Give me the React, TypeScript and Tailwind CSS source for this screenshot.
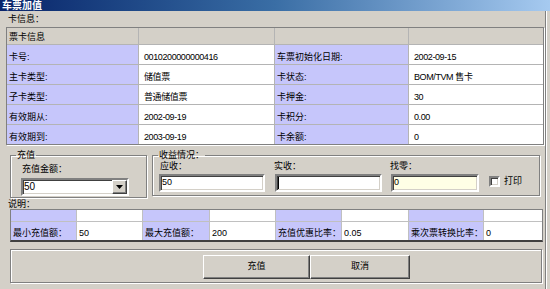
const font = "font-['Liberation_Sans','Noto_Sans_CJK_SC',sans-serif]";

const cardRows: [string, string, string, string][] = [
  ["卡号:", "0010200000000416", "车票初始化日期:", "2002-09-15"],
  ["主卡类型:", "储值票", "卡状态:", "BOM/TVM 售卡"],
  ["子卡类型:", "普通储值票", "卡押金:", "30"],
  ["有效期从:", "2002-09-19", "卡积分:", "0.00"],
  ["有效期到:", "2003-09-19", "卡余额:", "0"],
];

const limits: [string, string][] = [
  ["最小充值额：", "50"],
  ["最大充值额：", "200"],
  ["充值优惠比率：", "0.05"],
  ["乘次票转换比率：", "0"],
];

const sunken =
  "border-2 border-t-[#808080] border-l-[#808080] border-b-white border-r-white shadow-[inset_1px_1px_0_#404040,inset_-1px_-1px_0_#d4d0c8]";
const raised =
  "border border-t-white border-l-white border-b-[#404040] border-r-[#404040] shadow-[inset_-1px_-1px_0_#808080]";
const etched = "border border-[#808080] shadow-[inset_1px_1px_0_#fff,1px_1px_0_#fff]";

function TextBox({ value, className = "", caret = false }: { value: string; className?: string; caret?: boolean }) {
  return (
    <div className={`h-[18px] ${sunken} ${className} flex items-start pl-[1px] pt-[1px] text-[9px] leading-[10px]`}>
      {caret && <span className="w-px h-[12px] bg-black" />}
      {value}
    </div>
  );
}

export default function App() {
  return (
    <div className={`w-[550px] h-[289px] bg-[#d4d0c8] flex flex-col text-black ${font} overflow-hidden`}>
      {/* title bar */}
      <div className="h-[11px] bg-gradient-to-r from-[#0a246a] via-[#3a6ea5] to-[#a6caf0] flex items-center pl-[2px]">
        <span className="text-white font-bold text-[10px] leading-[11px]">车票加值</span>
      </div>

      <div className="flex-1 flex flex-col border-r border-r-[#808080] mr-[4px] shadow-[1px_0_0_#fff]">
        {/* card info */}
        <div className="h-[16px] pl-[8px] pt-[3px] text-[9px] leading-[11px]">卡信息：</div>
        <div className="ml-[6px] w-[538px] border border-[#808080] shadow-[1px_1px_0_#fff]">
          <div className="grid grid-cols-[131px_135px_133px_134px] grid-rows-[16px_repeat(5,19px)] gap-px bg-[#b4b4b4] text-[9px] leading-[11px]">
            <div className="bg-[#d4d0c8] flex items-end pl-[2px] pb-[1px]">票卡信息</div>
            <div className="bg-[#d4d0c8]" />
            <div className="bg-[#d4d0c8]" />
            <div className="bg-[#d4d0c8]" />
            {cardRows.map((r) => (
              <div key={r[0]} className="contents">
                <div className="bg-[#c6c6fb] flex items-end pl-[2px] pb-[1px]">{r[0]}</div>
                <div className="bg-white flex items-end pl-[5px] pb-[1px] tracking-[-0.4px]">{r[1]}</div>
                <div className="bg-[#c6c6fb] flex items-end pl-[2px] pb-[1px]">{r[2]}</div>
                <div className="bg-white flex items-end pl-[5px] pb-[1px] tracking-[-0.4px]">{r[3]}</div>
              </div>
            ))}
          </div>
        </div>

        {/* recharge + income */}
        <div className="mt-[5px] h-[49px] flex items-start text-[9px] leading-[11px]">
          <fieldset className={`ml-[10px] w-[137px] h-[48px] ${etched}`}>
            <legend className="ml-[5px] px-[1px]">充值</legend>
            <div className="pl-[11px] mt-[3px]">充值金额：</div>
            <div className={`ml-[10px] mt-[3px] w-[108px] h-[18px] ${sunken} bg-white flex items-stretch`}>
              <div className="flex-1 pl-[1px] pt-[1px] leading-[12px] text-[10px]">50</div>
              <div className={`w-[15px] bg-[#d4d0c8] ${raised} flex items-center justify-center`}>
                <svg width="7" height="4" viewBox="0 0 7 4">
                  <path d="M0 0h7L3.5 4z" fill="#000" />
                </svg>
              </div>
            </div>
          </fieldset>

          <fieldset className={`ml-[5px] w-[388px] h-[46px] ${etched}`}>
            <legend className="ml-[5px] px-[1px]">收益情况：</legend>
            <div className="flex items-start pl-[6px]">
              <div className="flex flex-col w-[106px]">
                <span className="pl-[1px]">应收：</span>
                <TextBox value="50" className="mt-[2px] bg-white" />
              </div>
              <div className="flex flex-col w-[107px] ml-[10px]">
                <span className="-ml-[1px]">实收：</span>
                <TextBox value="" caret className="mt-[2px] bg-white" />
              </div>
              <div className="flex flex-col w-[88px] ml-[9px]">
                <span className="-ml-[1px]">找零：</span>
                <TextBox value="0" className="mt-[2px] bg-[#ffffe6]" />
              </div>
              <label className="ml-[10px] mt-[15px] flex items-center gap-[4px]">
                <span className={`w-[11px] h-[11px] bg-white ${sunken}`} />
                <span>打印</span>
              </label>
            </div>
          </fieldset>
        </div>

        {/* notes */}
        <div className="h-[10px] pl-[8px] text-[9px] leading-[10px]">说明：</div>
        <div className="ml-[10px] w-[533px] border border-[#808080] border-b-2 border-b-[#404040]">
          <div className="grid grid-cols-[65px_65px_66px_65px_65px_66px_74px_1fr] grid-rows-[11px_18px] gap-px bg-[#c0c0c0] text-[9px] leading-[11px]">
            {limits.map((l) => (
              <div key={"t" + l[0]} className="contents">
                <div className="bg-[#c6c6fb]" />
                <div className="bg-white" />
              </div>
            ))}
            {limits.map((l) => (
              <div key={l[0]} className="contents">
                <div className="bg-[#c6c6fb] flex items-end pl-[2px] pb-[1px] whitespace-nowrap">{l[0]}</div>
                <div className="bg-white flex items-end pl-[2px] pb-[1px]">{l[1]}</div>
              </div>
            ))}
          </div>
        </div>

        {/* buttons */}
        <div className={`ml-[10px] mt-[7px] w-[532px] h-[34px] ${etched} flex items-start pt-[5px] pl-[192px] text-[9px]`}>
          <button className={`w-[107px] h-[24px] bg-[#d4d0c8] ${raised}`}>充值</button>
          <button className={`w-[100px] h-[24px] bg-[#d4d0c8] ${raised}`}>取消</button>
        </div>
      </div>
    </div>
  );
}
